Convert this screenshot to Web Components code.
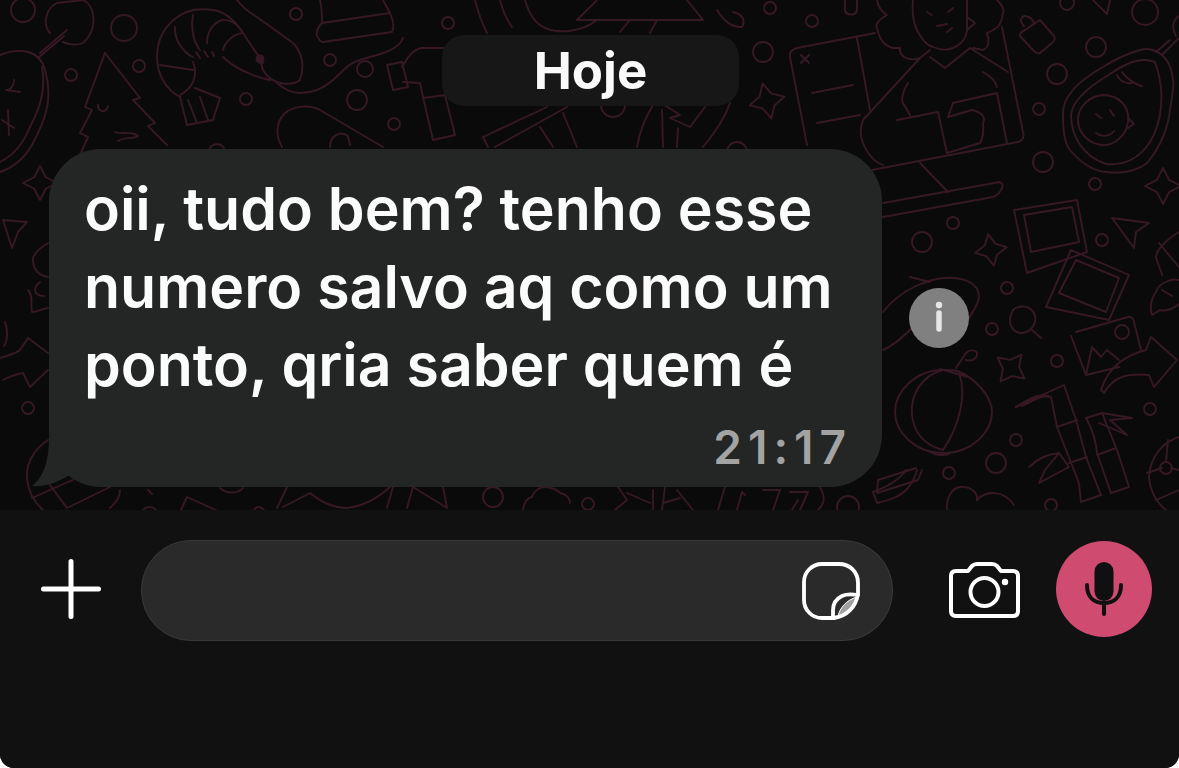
<!DOCTYPE html>
<html lang="pt">
<head>
<meta charset="utf-8">
<title>Conversa</title>
<style>
  html, body { margin: 0; background: #fff; }
</style>
</head>
<body>
<chat-screen>
  <date-pill>Hoje</date-pill>
  <message-row>
    <message-bubble time="21:17">oii, tudo bem? tenho esse<br>numero salvo aq como um<br>ponto, qria saber quem é</message-bubble>
  </message-row>
  <composer-bar slot="footer"></composer-bar>
</chat-screen>

<script>
// doodles of the chat background, in page coordinates
const DOTS = [
  [23,10,12],[124,28,13],[139,66,6],[71,75,6],[296,14,6],[330,60,6],[365,69,8],[357,100,10],[394,124,6],[246,99,6],[448,23,6],
  [763,52,10],[770,8,6],[812,21,6],[1096,47,10],[1057,74,10],[1039,109,6],[1043,162,10],[1095,184,6],[953,223,6],[922,242,10],
  [1102,240,6],[1145,12,13],[1067,3,7],[1007,288,6],[992,329,6],[1057,361,6],[1150,409,6],[1016,440,6],[996,463,10],[1051,505,6],
  [949,473,6],[28,408,6],[493,497,10],[588,504,6],[848,507,11],[1122,332,7],[1166,468,6],[737,152,10],[613,105,12],[217,152,8]
];
const STARS = [
  [767,101,18,-14],[1163,186,18,0],[991,250,16,-10],[40,183,17,0],[1011,368,17,38]
];
const DOODLES = [
  // left avocado and stem
  'M0 55C20 47 40 50 45 70C54 100 44 122 33 143C24 160 12 168 0 172',
  'M0 162C14 155 24 142 30 127C40 108 46 90 42 67',
  'M40 53L67 30M38 58L64 36','M50 33C42 24 46 8 57 3L83 0C96 6 98 30 83 43C76 46 68 44 63 42',
  'M20 92L6 90M14 80C14 86 10 90 7 90','M8 110L9 135M2 120L14 128',
  // tree
  'M105 53L140 98L133 100L155 123L148 126L167 145','M105 53L85 107L92 110L80 133L88 137L80 155',
  'M98 105C98 112 106 114 108 106','M115 132C122 135 130 130 138 136C132 140 126 136 118 141',
  // shrimp
  'M243 33C233 18 222 11 213 10C200 8 187 9 176 18C163 28 157 42 157 57C157 74 166 90 180 97',
  'M193 15C191 25 192 40 200 50','M175 27C174 38 182 52 193 57','M160 65L193 70','M193 62C198 74 194 88 180 95',
  'M180 97L187 125L213 120L220 98L195 88','M188 100L197 123','M200 97L208 120',
  'M207 43C207 32 213 23 222 20C230 19 238 24 243 33L263 63','M223 50C225 42 233 34 243 33','M223 57C232 66 250 76 270 80',
  'M196 52L200 58M204 51L208 57M212 52L214 56',
  // board, wire, hat, bottle
  'M237 0C243 8 250 13 257 17L293 43C302 52 305 66 300 80C292 86 272 86 263 70L260 59',
  'M277 83C285 90 293 93 300 93C314 93 324 88 333 80C342 72 350 62 360 60C374 55 398 52 403 38',
  'M320 0C322 8 322 16 322 23L390 13L383 0','M322 23C316 28 316 36 318 37C320 42 322 42 323 42L392 32C395 27 393 20 390 13',
  'M387 65L402 62L408 87L393 90Z','M402 67C408 56 415 48 423 48H447','M403 82L420 83L423 97L433 140L455 135L445 95L423 98',
  // skateboard
  'M282 147C275 135 276 122 285 113C294 106 310 104 320 110L383 147','M330 147C330 136 340 130 348 136L350 145',
  // arcs at the top of the pill
  'M475 0C478 12 482 23 487 33','M500 0C503 12 507 20 512 27','M525 0C529 14 536 24 545 28C560 34 582 32 597 20',
  'M597 0L577 20H703L687 0','M620 32L630 20','M650 33L657 20','M717 10C722 18 730 28 742 27C746 20 742 14 733 12',
  // pencil and lightning under the pill
  'M483 137L547 107','M488 147L483 137','M495 147L567 107','M540 127L553 147','M563 113L577 147',
  'M637 147C640 130 645 118 653 105','M662 110L663 147','M663 104L680 115L670 118L690 127L705 107','M678 128L677 147','M703 147C714 134 724 120 730 103',
  // tablet and woman
  'M875 33L797 48Q789 50 790 57L807 145','M1002 27L1023 132Q1025 140 1018 142L872 170','M857 38L870 110',
  'M801 55L809 63M809 55L801 63','M812 93L853 85','M817 123L860 115',
  'M913 0C912 12 913 22 917 30C922 40 927 46 933 47C940 50 948 50 953 48C962 44 968 36 967 25L967 0',
  'M927 12L932 15','M948 12L953 8','M937 26L947 24','M947 32L952 28',
  'M877 0C878 6 882 12 887 15C878 20 875 24 877 28C879 38 884 46 893 48L900 48C899 56 908 62 920 58L930 50',
  'M997 0C1002 5 1005 9 1003 13C1002 22 998 28 993 30L987 33C990 42 988 48 983 50L973 48',
  'M967 17L975 23L967 30','M930 57L945 68L970 48',
  'M920 58L863 120C860 128 860 136 863 143C868 155 874 162 883 165','M970 48L1008 72',
  'M908 83C903 90 901 100 903 103L910 115','M897 120L938 112L947 153','M953 103L997 93L1007 143',
  'M948 117L953 103M948 117L972 110C982 112 986 118 983 123C984 134 982 140 980 143L947 153','M983 72C990 76 996 82 997 87',
  'M920 163L948 192','M883 203L1000 182Q1004 184 1002 188Q1000 194 993 197L883 217',
  // padlock
  'M1025 30L1040 20L1054 36Q1056 40 1052 43L1040 53Q1036 54 1033 50L1020 36Q1020 32 1025 30Z','M1024 26C1018 20 1022 14 1028 17C1032 18 1034 22 1034 24',
  // right avocado with the baby
  'M1162 55C1155 49 1146 48 1140 50C1126 54 1114 60 1103 67C1080 80 1063 96 1063 113C1063 130 1064 142 1070 150C1080 162 1094 172 1107 172C1124 174 1138 170 1147 163C1160 148 1168 128 1170 110C1173 92 1174 82 1173 80C1172 70 1168 60 1162 55',
  'M1155 62C1140 56 1125 64 1110 74C1090 86 1072 100 1071 115C1071 135 1082 156 1106 164C1124 166 1140 158 1150 142C1162 122 1166 92 1155 62',
  'M1162 55L1179 38M1156 52L1170 40','M1078 120C1078 106 1090 96 1103 95C1120 95 1130 108 1128 122C1126 136 1114 146 1102 145C1088 144 1078 132 1078 120',
  'M1096 114L1101 118M1110 110L1114 116','M1096 133C1102 138 1110 136 1114 131','M1128 118L1134 124L1128 128',
  'M1117 75C1120 82 1128 84 1132 83','M1122 72C1126 78 1136 85 1142 86',
  // top right bits
  'M845 0V10C846 16 856 16 857 10V0','M1093 0L1107 14L1110 0','M1179 16C1172 20 1172 30 1176 36',
  // frames
  'M1014 210L1077 200L1087 252L1027 273Z','M1024 215L1072 207L1079 242L1031 252Z',
  'M1071 250L1129 275L1109 320L1046 307Z','M1076 260L1119 278L1106 312L1059 293Z',
  'M1112 218L1149 223L1136 232L1134 248Z',
  // image card and arrow
  'M1076 332L1128 317Q1133 316 1134 322L1141 350M1071 336L1086 375L1119 367','M1086 375L1092 347L1101 357L1107 350L1119 360',
  'M1101 390C1104 380 1110 370 1120 362C1128 356 1138 352 1146 350L1151 337L1177 360L1154 387L1149 375C1138 374 1130 374 1122 377C1114 380 1108 386 1104 393Z',
  // magnifier
  'M1013 310C1020 304 1030 306 1034 313C1038 322 1032 332 1022 333C1012 333 1006 322 1013 310','M1032 330L1041 338',
  // lantern
  'M957 371C972 376 992 395 992 412C992 432 972 453 943 453C915 453 895 432 895 412C895 392 915 370 943 370C948 370 953 370 957 371',
  'M943 370C922 375 910 395 912 415C914 432 924 445 943 450','M960 376C966 395 960 425 943 450','M940 369L968 377','M956 368L966 353C970 349 976 350 977 353C978 358 972 362 966 360',
  'M930 451C934 456 946 456 950 453','M922 470L918 480L877 493L878 480L916 468',
  // bamboo
  'M1016 407C1030 398 1042 392 1051 397L1057 427L1079 483L1081 502L1101 495','M1016 407L1064 385L1076 420L1086 457L1101 495','M1022 406C1032 402 1042 394 1049 397',
  'M1057 427L1077 420','M1069 463L1087 457','M1086 418C1094 432 1096 442 1097 453L1111 493L1129 487L1117 450L1102 413L1086 418','M1097 455L1116 448',
  'M1102 413L1132 418L1110 420L1127 435L1099 423','M1029 467C1038 458 1050 454 1059 453L1045 470L1039 483L1069 467L1059 453',
  // globe right
  'M1149 477C1150 458 1162 442 1179 437','M1149 477C1150 490 1156 502 1166 510','M1147 473L1162 468','M1156 500L1179 490','M1171 468L1179 470','M1168 440L1166 462',
  // right edge
  'M1179 232C1166 240 1156 250 1156 257C1158 266 1162 272 1162 275','M1159 243L1179 267','M1179 280C1170 278 1158 284 1156 292C1150 300 1150 310 1152 315L1160 310C1168 312 1174 308 1179 304','M1162 290L1172 296',
  // comet behind the info button
  'M883 312C900 290 930 276 955 278C975 280 985 292 975 308L965 325','M883 350C895 345 905 335 912 328','M910 277L930 282',
  // left strip
  'M3 220L27 222L18 232L12 248Z','M48 243C36 250 32 258 33 260C33 270 38 275 48 277','M28 290C34 296 30 304 32 312C38 312 44 308 48 308','M40 282C32 288 34 296 44 296',
  'M0 358C8 356 18 352 20 350L28 338L48 353','M3 380C10 376 18 374 23 373L30 387L48 370','M5 322C8 330 8 340 4 346',
  // globe left, mostly under the bubble
  'M48 440C32 450 26 466 27 478C28 490 34 502 43 510','M32 498L77 478','M50 485L67 508L110 487','M120 490C120 496 116 503 110 508',
  // strip under the bubble
  'M148 490L152 494','M143 510C147 506 152 506 156 510','M187 497L181 510M187 497L216 510','M220 488C226 494 238 494 243 488','M254 510C256 506 260 506 264 510',
  'M277 508L287 487M283 507L310 493C322 503 334 508 347 508C364 506 378 498 390 487','M387 508L393 487','M407 508L413 487L447 508L443 487',
  'M523 510C524 502 527 498 532 497C534 490 542 486 547 487C552 488 558 490 560 493C566 494 570 498 570 503',
  'M618 487L627 500L615 510','M627 493L650 503','M653 490V510','M665 487L662 510','M677 490L693 510','M663 503L680 498',
  'M725 487L718 510','M742 492L737 510','M745 495L742 492','M763 490H780L773 510','M790 492H808L800 510','M792 510L798 500','M820 487C826 498 824 504 818 510',
  'M873 492L877 503C890 500 900 497 908 488C914 480 916 474 917 470','M873 492C884 488 898 482 906 470','M947 510C946 498 952 488 960 487C970 486 978 492 977 500','M977 500C986 490 1004 490 1014 505'
];

class ChatWallpaper extends HTMLElement {
  constructor() {
    super();
    this.attachShadow({ mode: 'open' });
  }

  connectedCallback() {
    const dots = DOTS.map(([x, y, r]) => `<circle cx="${x}" cy="${y}" r="${r}"/>`).join('');
    const stars = STARS.map(([x, y, s, rot]) => {
      const a = s * 0.34;
      return `<path transform="translate(${x} ${y}) rotate(${rot})" d="M0 ${-s}L${a} ${-a}L${s} 0L${a} ${a}L0 ${s}L${-a} ${a}L${-s} 0L${-a} ${-a}Z"/>`;
    }).join('');
    const lines = DOODLES.map(d => `<path d="${d}"/>`).join('');
    this.shadowRoot.innerHTML = `
      <style>
        :host { display: block; position: absolute; inset: 0; }
        svg { display: block; width: 100%; height: 100%; }
      </style>
      <svg viewBox="0 0 1179 510" fill="none" stroke="#371925" stroke-width="1.9" stroke-linecap="round" stroke-linejoin="round">
        ${lines}${dots}${stars}
        <circle cx="260" cy="59" r="3.5" fill="#371925"/>
      </svg>
    `;
  }
}

class ChatScreen extends HTMLElement {
  constructor() {
    super();
    this.attachShadow({ mode: 'open' });
  }

  connectedCallback() {
    this.shadowRoot.innerHTML = `
      <style>
        :host {
          display: flex;
          flex-direction: column;
          width: 1179px;
          height: 768px;
          overflow: hidden;
          border-radius: 0 0 14px 14px;
          background: #111111;
          font-family: Inter, "Liberation Sans", sans-serif;
        }
        .messages {
          position: relative;
          height: 510px;
          flex: none;
          box-sizing: border-box;
          padding-top: 35px;
          background: #0a0a0b;
        }
        .content { position: relative; display: flex; flex-direction: column; }
      </style>
      <div class="messages">
        <chat-wallpaper></chat-wallpaper>
        <div class="content"><slot></slot></div>
      </div>
      <slot name="footer"></slot>
    `;
  }
}

class DatePill extends HTMLElement {
  constructor() {
    super();
    this.attachShadow({ mode: 'open' });
  }

  connectedCallback() {
    this.shadowRoot.innerHTML = `
      <style>
        :host {
          display: flex;
          align-items: center;
          justify-content: center;
          align-self: center;
          width: 297px;
          height: 71px;
          margin-left: 2px;
          border-radius: 22px;
          background: #171717;
          color: #fafafa;
          font-size: 51px;
          font-weight: 700;
        }
      </style>
      <slot></slot>
    `;
  }
}

class MessageRow extends HTMLElement {
  constructor() {
    super();
    this.attachShadow({ mode: 'open' });
  }

  connectedCallback() {
    this.shadowRoot.innerHTML = `
      <style>
        :host {
          display: flex;
          align-items: center;
          gap: 27px;
          margin-top: 43px;
          padding-left: 49px;
        }
        .info {
          width: 60px;
          height: 60px;
          border-radius: 50%;
          background: #808080;
          flex: none;
        }
        svg { display: block; }
      </style>
      <slot></slot>
      <div class="info">
        <svg width="60" height="60" viewBox="0 0 60 60">
          <circle cx="30" cy="17" r="3.2" fill="#e6e6e6"/>
          <path d="M30 25V41" stroke="#e6e6e6" stroke-width="5.5" stroke-linecap="round"/>
        </svg>
      </div>
    `;
  }
}

class MessageBubble extends HTMLElement {
  constructor() {
    super();
    this.attachShadow({ mode: 'open' });
  }

  connectedCallback() {
    const time = this.getAttribute('time');
    this.shadowRoot.innerHTML = `
      <style>
        :host {
          display: block;
          position: relative;
          box-sizing: border-box;
          width: 833px;
          height: 338px;
          padding: 21px 36px 0 35px;
          border-radius: 52px;
          background: #242626;
          color: #fbfbfb;
          font-size: 59px;
          font-weight: 600;
          line-height: 78px;
          white-space: nowrap;
        }
        .time {
          text-align: right;
          font-size: 46px;
          font-weight: 600;
          line-height: 58px;
          margin: 14px -6px 0 0;
          color: #a3a3a3;
          letter-spacing: 6px;
        }
        .tail { position: absolute; left: -17px; bottom: 0; }
      </style>
      <svg class="tail" width="60" height="50" viewBox="0 0 60 50">
        <path fill="#242626" d="M17 0C17 28 10 41 0 49C13 50 28 45 40 36L60 30L40 0Z"/>
      </svg>
      <slot></slot>
      <div class="time">${time}</div>
    `;
  }
}

class ComposerBar extends HTMLElement {
  constructor() {
    super();
    this.attachShadow({ mode: 'open' });
  }

  connectedCallback() {
    this.shadowRoot.innerHTML = `
      <style>
        :host {
          display: flex;
          align-items: center;
          flex: 1;
          box-sizing: border-box;
          height: 258px;
          padding: 30px 0 127px 41px;
          background: #111111;
        }
        svg { display: block; flex: none; }
        .plus { margin-top: -3px; }
        .field {
          display: flex;
          align-items: center;
          justify-content: flex-end;
          box-sizing: border-box;
          width: 752px;
          height: 101px;
          margin-left: 40px;
          padding-right: 32px;
          border: 1px solid #3a3a3a;
          border-radius: 50px;
          background: #2a2a2a;
        }
        .camera { margin-left: 56px; margin-top: -2px; }
        .mic {
          width: 96px;
          height: 96px;
          margin: -3px 0 0 36px;
          border-radius: 50%;
          background: #d04b70;
          flex: none;
        }
      </style>
      <svg class="plus" width="60" height="60" viewBox="0 0 60 60">
        <path d="M30 2.500V57.500M2.500 30H57.500" stroke="#fff" stroke-width="5" stroke-linecap="round"/>
      </svg>
      <div class="field">
        <svg width="58" height="58" viewBox="0 0 58 58" fill="none" stroke="#fff" stroke-width="3.800" stroke-linecap="round" stroke-linejoin="round">
          <path d="M20 2H37C48 2 56 10 56 21V32C54 45 45 54 32 56H20C10 56 2 48 2 38V20C2 10 10 2 20 2Z"/>
          <path d="M56 33C50 32 44 32 40 34C34 37 31 42 31 48V56"/>
          <path d="M55 35C53 44 46 52 36 54C38 46 44 38 55 35Z" fill="#fff" fill-opacity="0.55" stroke-width="1"/>
        </svg>
      </div>
      <svg class="camera" width="71" height="56" viewBox="0 0 71 56" fill="none" stroke="#fff" stroke-width="4" stroke-linejoin="round">
        <path d="M7 9H19L23 4Q25 2 28 2H43Q46 2 48 4L52 9H64Q69 9 69 14V49Q69 54 64 54H7Q2 54 2 49V14Q2 9 7 9Z"/>
        <circle cx="35.500" cy="30" r="14"/>
        <circle cx="56" cy="20" r="3.200" fill="#fff" stroke="none"/>
      </svg>
      <div class="mic">
        <svg width="96" height="96" viewBox="0 0 96 96" fill="none" stroke="#101010" stroke-width="4" stroke-linecap="round">
          <rect x="38.500" y="21" width="19" height="39" rx="9.500" fill="#101010" stroke="none"/>
          <path d="M31 44C31 56 38 62 48 62C58 62 65 56 65 44"/>
          <path d="M48 62V73"/>
        </svg>
      </div>
    `;
  }
}

customElements.define('chat-wallpaper', ChatWallpaper);
customElements.define('chat-screen', ChatScreen);
customElements.define('date-pill', DatePill);
customElements.define('message-row', MessageRow);
customElements.define('message-bubble', MessageBubble);
customElements.define('composer-bar', ComposerBar);
</script>
</body>
</html>
